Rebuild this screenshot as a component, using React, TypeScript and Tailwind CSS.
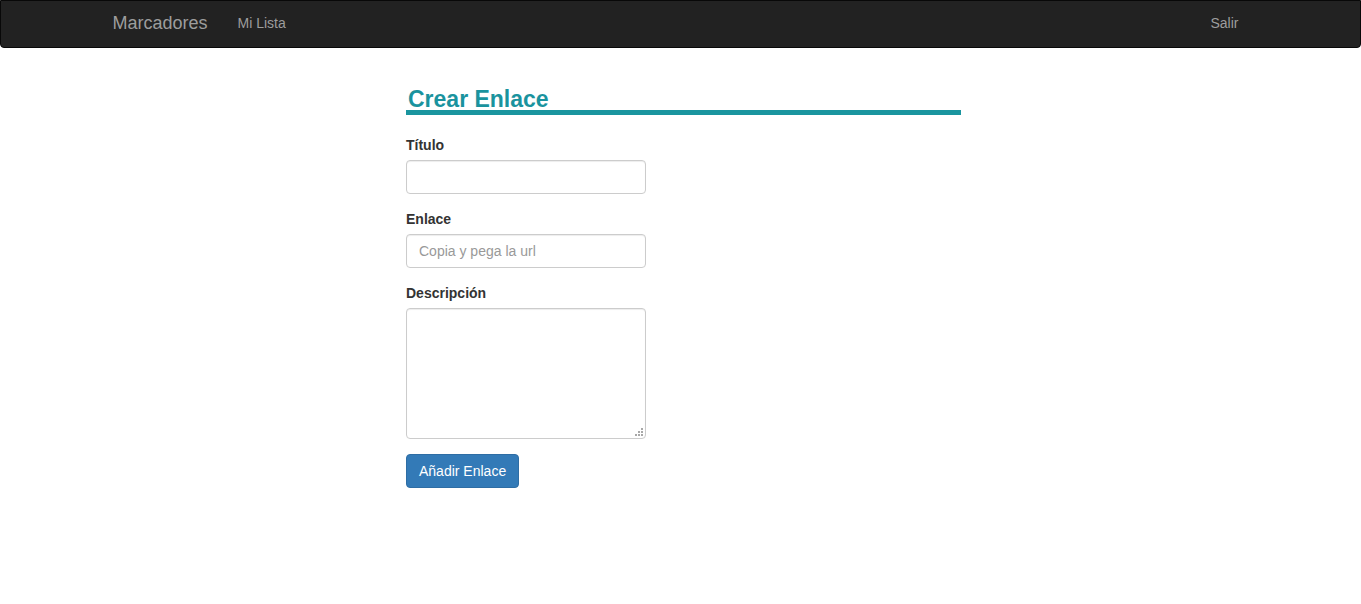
import React from 'react';

const font = { fontFamily: '"Liberation Sans", Arial, sans-serif' };

export default function App() {
  return (
    <div className="min-h-[604px] bg-white text-[14px] text-[#333]" style={font}>
      <nav className="h-[48px] bg-[#222] border border-[#080808] rounded-b-[4px]">
        <div className="w-[1170px] mx-auto px-[15px] pb-[2px] flex items-center h-full">
          <a className="text-[18px] text-[#9d9d9d] pl-[2px] leading-[20px]">Marcadores</a>
          <a className="text-[14px] text-[#9d9d9d] ml-[30px] leading-[20px]">Mi Lista</a>
          <a className="text-[14px] text-[#9d9d9d] ml-auto mr-[12px] leading-[20px]">Salir</a>
        </div>
      </nav>
      <div className="w-[555px] ml-[406px] pt-[40px]">
        <h3 className="text-[23px] font-bold text-[#1a939e] leading-[22px] border-b-[5px] border-[#1a959f] pl-[2px]">
          Crear Enlace
        </h3>
        <form className="mt-[20px] flex flex-col">
          <label className="font-bold text-[14px] leading-[20px] mb-[5px] text-[#333]">Título</label>
          <input
            type="text"
            className="w-[240px] h-[34px] border border-[#ccc] rounded-[4px] px-3 text-[14px] shadow-[inset_0_1px_1px_rgba(0,0,0,0.075)] outline-none"
          />
          <label className="font-bold text-[14px] leading-[20px] mb-[5px] mt-[15px] text-[#333]">Enlace</label>
          <input
            type="text"
            placeholder="Copia y pega la url"
            className="w-[240px] h-[34px] border border-[#ccc] rounded-[4px] px-3 text-[14px] placeholder:text-[#999] shadow-[inset_0_1px_1px_rgba(0,0,0,0.075)] outline-none"
          />
          <label className="font-bold text-[14px] leading-[20px] mb-[5px] mt-[15px] text-[#333]">Descripción</label>
          <div className="relative w-[240px] h-[131px]">
            <textarea className="w-full h-full resize-none border border-[#ccc] rounded-[4px] px-3 py-[6px] text-[14px] shadow-[inset_0_1px_1px_rgba(0,0,0,0.075)] outline-none" />
            <svg className="absolute right-[3px] bottom-[3px]" width="8" height="8" viewBox="0 0 8 8">
              <rect x="6" y="0" width="2" height="2" fill="#a8a8a8" />
              <rect x="3" y="3" width="2" height="2" fill="#a8a8a8" />
              <rect x="6" y="3" width="2" height="2" fill="#a8a8a8" />
              <rect x="0" y="6" width="2" height="2" fill="#a8a8a8" />
              <rect x="3" y="6" width="2" height="2" fill="#a8a8a8" />
              <rect x="6" y="6" width="2" height="2" fill="#a8a8a8" />
            </svg>
          </div>
          <div className="mt-[15px]">
            <button
              type="button"
              className="h-[34px] px-3 bg-[#337ab7] border border-[#2e6da4] rounded-[4px] text-white text-[14px] leading-[20px]"
            >
              Añadir Enlace
            </button>
          </div>
        </form>
      </div>
    </div>
  );
}
